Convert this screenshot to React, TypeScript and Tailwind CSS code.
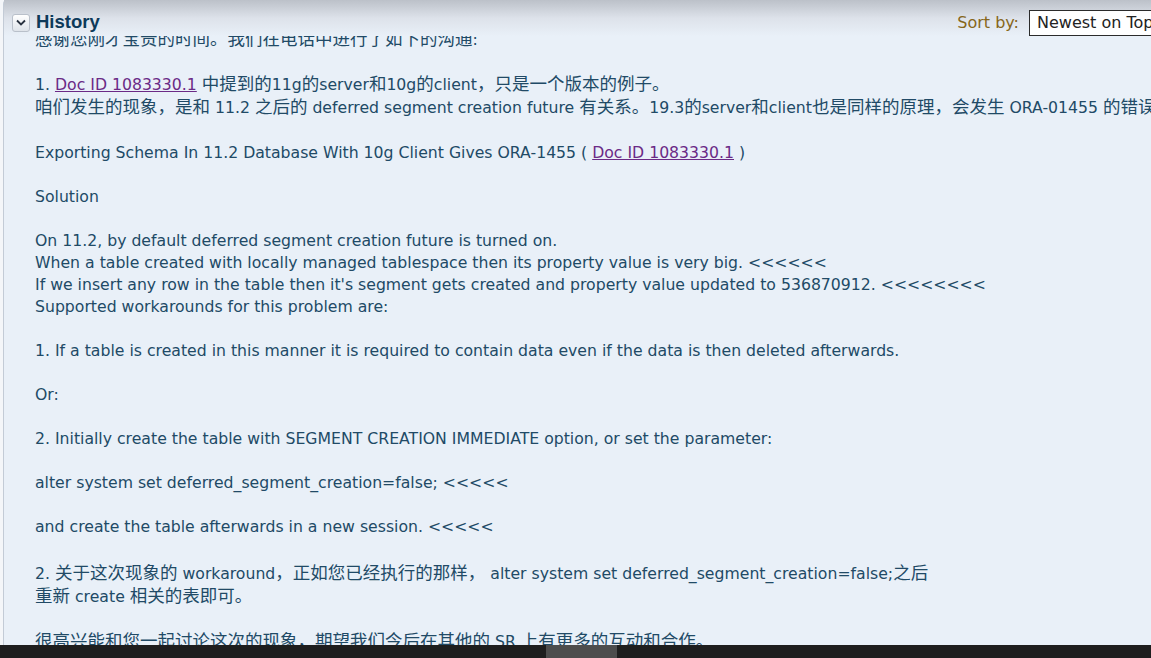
import React from "react";

const FONT = "'DejaVu Sans', 'Noto Sans CJK SC', sans-serif";

const CJK_RE = /([\u3000-\u303f\u4e00-\u9fff\uff00-\uffef]+)/;

function Mixed({ s }: { s: string }) {
  const parts = s.split(CJK_RE);
  return (
    <>
      {parts.map((p, i) =>
        i % 2 === 1 ? (
          <span key={i} className="text-[17.5px]" style={{ fontFamily: "'Noto Sans CJK SC', sans-serif" }}>
            {p}
          </span>
        ) : (
          <React.Fragment key={i}>{p}</React.Fragment>
        )
      )}
    </>
  );
}

type Line = { t?: React.ReactNode; h?: string };

const Link = ({ children }: { children: React.ReactNode }) => (
  <span className="text-[#6b2a86] underline">{children}</span>
);

const lines: Line[] = [
  { t: <Mixed s="感谢您刚才宝贵的时间。我们在电话中进行了如下的沟通:" />, h: "h-[23px] leading-[23px]" },
  {},
  {
    t: (
      <>
        1. <Link>Doc ID 1083330.1</Link> <Mixed s="中提到的11g的server和10g的client，只是一个版本的例子。" />
      </>
    ),
    h: "h-[23px] leading-[23px]",
  },
  {
    t: (
      <Mixed s="咱们发生的现象，是和 11.2 之后的 deferred segment creation future 有关系。19.3的server和client也是同样的原理，会发生 ORA-01455 的错误。" />
    ),
    h: "h-[23px] leading-[23px]",
  },
  { h: "h-[25px] leading-[25px]" },
  {
    t: (
      <>
        Exporting Schema In 11.2 Database With 10g Client Gives ORA-1455 ( <Link>Doc ID 1083330.1</Link> )
      </>
    ),
  },
  {},
  { t: "Solution" },
  {},
  { t: "On 11.2, by default deferred segment creation future is turned on." },
  { t: "When a table created with locally managed tablespace then its property value is very big. <<<<<<" },
  { t: "If we insert any row in the table then it's segment gets created and property value updated to 536870912. <<<<<<<<" },
  { t: "Supported workarounds for this problem are:" },
  {},
  { t: "1. If a table is created in this manner it is required to contain data even if the data is then deleted afterwards." },
  {},
  { t: "Or:" },
  {},
  { t: "2. Initially create the table with SEGMENT CREATION IMMEDIATE option, or set the parameter:" },
  {},
  { t: "alter system set deferred_segment_creation=false; <<<<<" },
  {},
  { t: "and create the table afterwards in a new session. <<<<<" },
  {},
  {
    t: <Mixed s="2. 关于这次现象的 workaround，正如您已经执行的那样， alter system set deferred_segment_creation=false;之后" />,
    h: "h-[23px] leading-[23px]",
  },
  { t: <Mixed s="重新 create 相关的表即可。" />, h: "h-[23px] leading-[23px]" },
  {},
  { t: <Mixed s="很高兴能和您一起讨论这次的现象，期望我们今后在其他的 SR 上有更多的互动和合作。" />, h: "h-[23px] leading-[23px]" },
];

export default function App() {
  return (
    <div
      className="relative w-[1151px] h-[658px] overflow-hidden bg-[#f4f6f9] flex flex-col"
      style={{ fontFamily: FONT }}
    >
      <div className="flex-1 ml-[3px] flex flex-col min-h-0 border-l border-[#c3cbd6] rounded-tl-[4px] bg-[#e9f0f8]">
        {/* Header */}
        <div className="relative z-10 h-[36px] shrink-0 flex items-center bg-gradient-to-b from-[#bcc1c9] via-[#dde2ea] to-[#e9f0f8] pt-[9px]">
          <div className="ml-[8px] w-[18px] h-[18px] rounded-[3px] border border-[#b9c0ca] bg-gradient-to-b from-white to-[#dfe4ea] flex items-center justify-center">
            <svg width="10" height="7" viewBox="0 0 10 7">
              <path d="M1 1.5 L5 5.5 L9 1.5" fill="none" stroke="#2a3340" strokeWidth="1.8" />
            </svg>
          </div>
          <div
            className="ml-[6px] text-[18.5px] font-bold text-[#0d3a5a] leading-none"
            style={{ fontFamily: "'Liberation Sans', sans-serif" }}
          >
            History
          </div>
          <div className="ml-auto flex items-center mr-[-40px]">
            <span className="text-[16px] text-[#86661a] mr-[10px]">Sort by:</span>
            <div className="h-[26px] w-[162px] bg-white border border-[#2b2b2b] flex items-center pl-[7px] text-[16px] text-[#222]">
              Newest on Top
            </div>
          </div>
        </div>
        {/* Content */}
        <div className="flex-1 min-h-0 overflow-hidden">
          <div className="mt-[-10.5px] pl-[31px] text-[15.7px] text-[#214a66] whitespace-nowrap">
            {lines.map((l, i) => (
              <div key={i} className={l.h ?? "h-[22px] leading-[22px]"}>
                {l.t ?? "\u00a0"}
              </div>
            ))}
          </div>
        </div>
      </div>
      {/* bottom bar */}
      <div className="h-[13px] shrink-0 bg-[#1e1e1e] relative">
        <div className="absolute left-[546px] top-0 w-[71px] h-[13px] bg-[#4d4d4d]" />
      </div>
    </div>
  );
}
